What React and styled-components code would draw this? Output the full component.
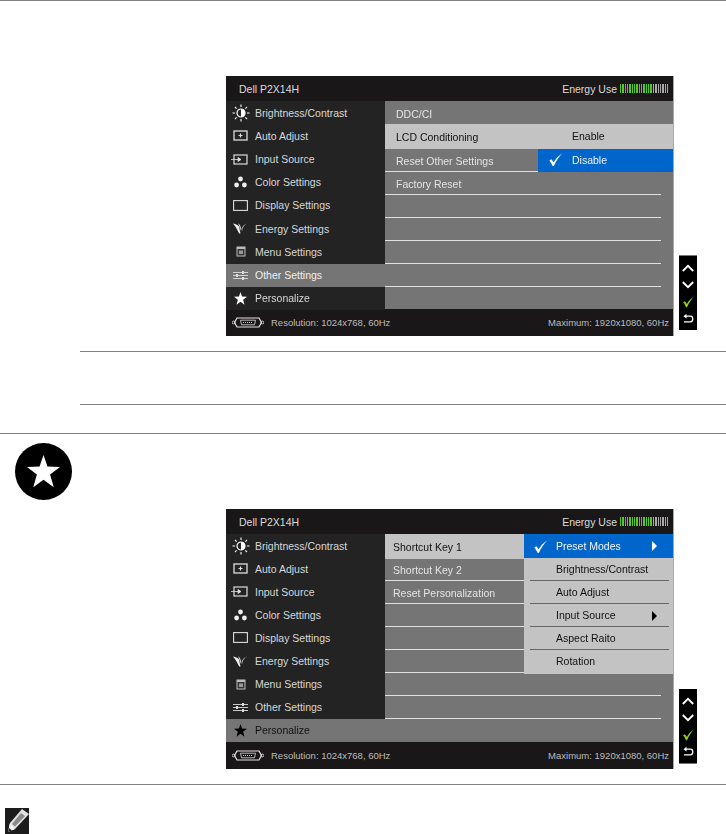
import React from "react";
import styled, { createGlobalStyle } from "styled-components";

const GlobalStyle = createGlobalStyle`
  html, body {
    margin: 0;
    height: 834px;
    overflow: hidden;
    background: #fff;
    font-family: "Liberation Sans", Arial, sans-serif;
  }
`;

const Page = styled.div`
  width: 726px;
  height: 834px;
  overflow: hidden;
`;

const Rule = styled.div`
  height: 1px;
  background: #7f7f7f;
  margin-left: ${(p) => p.$inset || 0}px;
  margin-top: ${(p) => p.$top || 0}px;
`;

const Shot = styled.section`
  display: flex;
  align-items: flex-end;
  padding-top: 75px;
`;

const Gutter = styled.div`
  width: 226px;
  height: 260px;
  margin-top: -75px;
  align-self: flex-start;
  flex-shrink: 0;
`;

const Badge = styled.div`
  width: 57px;
  height: 57px;
  margin: 9px 0 0 15px;
  border-radius: 50%;
  background: #000;
  display: flex;
  align-items: center;
  justify-content: center;
`;

const Osd = styled.div`
  position: relative;
  width: 447px;
  height: 260px;
  display: grid;
  grid-template-rows: 25px 208px 27px;
  background: #757575;
  box-shadow: 1px 0 0 #a8a8a8;
  filter: blur(0.4px);
  flex-shrink: 0;
`;

const Bar = styled.div`
  background: #1a1718;
  color: ${(p) => (p.$dim ? "#bdbdbd" : "#dcdcdc")};
  display: flex;
  align-items: center;
  justify-content: space-between;
  padding: 0 4px 0 ${(p) => p.$left || 13}px;
  font-size: ${(p) => (p.$dim ? 9.5 : 10.5)}px;
`;

const EnergyWrap = styled.div`
  display: flex;
  align-items: center;
  gap: ${(p) => p.$gap || 3}px;
`;

const Meter = styled.div`
  display: flex;
  gap: 1px;
  height: 9px;
  width: 49px;
  overflow: hidden;
`;

const Tick = styled.i`
  display: block;
  width: 1.35px;
  flex-shrink: 0;
  background: ${(p) => (p.$on ? "#58c52b" : "#a8a8a8")};
`;

const Body = styled.div`
  display: grid;
  grid-template-columns: 159px 1fr;
  position: relative;
  min-height: 0;
`;

const Side = styled.div`
  background: #232323;
  display: grid;
  grid-template-rows: repeat(9, 1fr);
`;

const SideRow = styled.div`
  display: flex;
  align-items: center;
  color: ${(p) => (p.$dark ? "#111" : p.$active ? "#f0f0f0" : "#d8d8d8")};
  background: ${(p) => (p.$active ? "#757575" : "transparent")};
  font-size: 10.5px;
`;

const IconBox = styled.span`
  width: 29px;
  display: flex;
  justify-content: center;
  align-items: center;
  flex-shrink: 0;
`;

const List = styled.div`
  display: flex;
  flex-direction: column;
  min-width: 0;
`;

const Item = styled.div`
  height: ${(p) => p.$h || 23}px;
  box-sizing: border-box;
  display: flex;
  align-items: center;
  padding-left: ${(p) => p.$pad || 11}px;
  padding-top: ${(p) => p.$shift || 0}px;
  font-size: 10.5px;
  color: ${(p) => (p.$selected ? "#111" : "#e4e4e4")};
  background: ${(p) => (p.$selected ? "#c3c3c3" : "transparent")};
  position: relative;
  white-space: nowrap;
  &::after {
    content: ${(p) => (p.$line ? '""' : "none")};
    position: absolute;
    left: 0;
    right: ${(p) => p.$lineEnd ?? 12}px;
    bottom: 0;
    height: 1.5px;
    background: #e0e0e0;
  }
`;

const Flyout = styled.div`
  position: absolute;
  top: ${(p) => p.$top}px;
  right: 0;
  width: ${(p) => p.$w}px;
  display: flex;
  flex-direction: column;
  background: ${(p) => p.$bg || "transparent"};
`;

const FlyItem = styled.div`
  height: ${(p) => p.$h || 23}px;
  box-sizing: border-box;
  display: flex;
  align-items: center;
  position: relative;
  padding-bottom: ${(p) => p.$lift ?? 2}px;
  font-size: 10.5px;
  color: ${(p) => (p.$on ? "#f2f2f2" : "#111")};
  background: ${(p) => (p.$on ? "#0066cc" : "transparent")};
  ${(p) => p.$rule && "&::after { content: ''; position: absolute; left: 6px; right: 4px; bottom: 0; height: 1.5px; background: #666; }"}
`;

const CheckBox = styled.span`
  width: ${(p) => p.$w}px;
  display: flex;
  justify-content: center;
  flex-shrink: 0;
`;

const Caret = styled.span`
  position: absolute;
  left: 128px;
  top: 50%;
  transform: translateY(-50%);
  width: 0;
  height: 0;
  border-left: 5px solid ${(p) => p.$color};
  border-top: 5.5px solid transparent;
  border-bottom: 5.5px solid transparent;
`;

const Strip = styled.div`
  width: 18px;
  height: 74px;
  margin-left: 6px;
  margin-bottom: 6px;
  background: #000;
  box-sizing: border-box;
  padding: 3px 0;
  box-shadow: ${(p) => (p.$shade === "top" ? "0 -1px 0 #777" : "0 1px 0 #777")};
  display: grid;
  grid-template-rows: repeat(4, 1fr);
  justify-items: center;
  align-items: center;
`;

const NoteIcon = styled.div`
  width: 24px;
  height: 26px;
  margin: 23px 0 0 5px;
  background: #1c1c1c;
  display: flex;
`;

const Tick2 = ({ size = 15, color = "#fff" }) => (
  <svg width={size} height={size} viewBox="0 0 16 16">
    <path d="M1.5 9 L3.6 7.7 L6 11 C8 7.5 11 4 15 1.5 C11.5 5 8.5 9.5 6.2 15 L5 15 C4 12.8 2.9 10.8 1.5 9 Z" fill={color} />
  </svg>
);

const Sun = () => (
  <svg width="18" height="18" viewBox="0 0 18 18">
    <circle cx="9" cy="9" r="4" fill="none" stroke="#fff" strokeWidth="1.2" />
    <path d="M9 5 A4 4 0 0 1 9 13 Z" fill="#fff" />
    <path d="M9 0.5V3M9 15V17.5M0.5 9H3M15 9H17.5M3 3L4.6 4.6M13.4 13.4L15 15M3 15L4.6 13.4M13.4 4.6L15 3" stroke="#fff" strokeWidth="1.1" />
  </svg>
);

const AutoAdjust = () => (
  <svg width="15" height="11" viewBox="0 0 15 11">
    <rect x="1" y="1" width="13" height="9" fill="none" stroke="#ddd" strokeWidth="1.3" />
    <path d="M7.5 3.5V7.5M5.5 5.5H9.5" stroke="#ddd" strokeWidth="1.2" />
  </svg>
);

const InputSource = () => (
  <svg width="19" height="11" viewBox="0 0 19 11">
    <rect x="3" y="1" width="13" height="9" fill="none" stroke="#ddd" strokeWidth="1.2" />
    <path d="M0 5.5H9M7 3.5L10 5.5L7 7.5Z" stroke="#ddd" fill="#ddd" strokeWidth="0.8" />
  </svg>
);

const ColorDots = () => (
  <svg width="13" height="12" viewBox="0 0 13 12">
    <circle cx="6.5" cy="3" r="2.4" fill="#eee" />
    <circle cx="2.6" cy="9" r="2.4" fill="#eee" />
    <circle cx="10.4" cy="9" r="2.4" fill="#eee" />
  </svg>
);

const DisplayIcon = () => (
  <svg width="15" height="11" viewBox="0 0 15 11">
    <rect x="0.6" y="0.6" width="13.8" height="9.8" fill="none" stroke="#ddd" strokeWidth="1.1" />
  </svg>
);

const EnergyIcon = () => (
  <svg width="15" height="11" viewBox="0 0 15 11">
    <path d="M0 0.5 C3 1 5 2 6 3.5 L7.5 10.5 L6.2 10.5 C4.5 7 2.5 3.5 0 0.5Z" fill="#eee" />
    <path d="M5 0.5 C6.5 1 7.5 2.5 8 5 L7.5 8 C7 5 6 2.5 5 0.5Z" fill="#ccc" />
    <path d="M14.5 0.5 C11.5 1.5 9.8 4 9 8.5 L8.4 6 C9.5 3 11.5 1 14.5 0.5Z" fill="#aaa" />
  </svg>
);

const MenuIcon = () => (
  <svg width="10" height="11" viewBox="0 0 10 11">
    <rect x="0.5" y="0.5" width="9" height="10" fill="#bbb" />
    <rect x="1.5" y="3" width="7" height="6.5" fill="#333" />
    <rect x="3" y="4.5" width="4" height="3.5" fill="#999" />
  </svg>
);

const Sliders = () => (
  <svg width="15" height="9" viewBox="0 0 15 9">
    <path d="M0 1.5H15M0 4.5H15M0 7.5H15" stroke="#ddd" strokeWidth="0.9" />
    <rect x="9" y="0" width="2" height="3" fill="#ddd" />
    <rect x="3" y="3" width="2" height="3" fill="#ddd" />
    <rect x="9" y="6" width="2" height="3" fill="#ddd" />
  </svg>
);

const Star = ({ size = 13, color = "#fff" }) => (
  <svg width={size} height={size} viewBox="0 0 20 20">
    <path d="M10 0 L12.4 7 L20 7.3 L14 11.8 L16.2 19.5 L10 15 L3.8 19.5 L6 11.8 L0 7.3 L7.6 7 Z" fill={color} />
  </svg>
);

const VgaPlug = () => (
  <svg width="32" height="11" viewBox="0 0 32 11">
    <path d="M5 1 H27 L29.5 5.5 L27 10 H5 L2.5 5.5 Z" fill="none" stroke="#e4e4e4" strokeWidth="1.2" />
    <path d="M8.5 3.2 H23.5 L22.5 7.8 H9.5 Z" fill="none" stroke="#ccc" strokeWidth="0.9" />
    <path d="M11 5.5H21" stroke="#ccc" strokeWidth="1.2" strokeDasharray="1 1" />
    <circle cx="1.6" cy="5.5" r="1.4" fill="none" stroke="#ddd" strokeWidth="0.9" />
    <circle cx="30.4" cy="5.5" r="1.4" fill="none" stroke="#ddd" strokeWidth="0.9" />
  </svg>
);

const ChevUp = () => (
  <svg width="12" height="8" viewBox="0 0 12 8">
    <path d="M0.8 7 L6 1.8 L11.2 7" fill="none" stroke="#fff" strokeWidth="1.8" />
  </svg>
);

const ChevDown = () => (
  <svg width="12" height="8" viewBox="0 0 12 8">
    <path d="M0.8 1 L6 6.2 L11.2 1" fill="none" stroke="#fff" strokeWidth="1.8" />
  </svg>
);

const BackArrow = () => (
  <svg width="11" height="11" viewBox="0 0 11 11">
    <path d="M2 3.2 H7.5 C10.5 3.2 10.5 8.8 7.5 8.8 H1" fill="none" stroke="#fff" strokeWidth="1.3" />
    <path d="M0.5 3.2 L3.5 0.8 V5.6 Z" fill="#fff" />
  </svg>
);

const Pencil = () => (
  <svg width="24" height="26" viewBox="0 0 24 26">
    <path d="M17 1 L24 6 L10 21 L3 24 L5 15 Z" fill="#e2e2e2" />
    <path d="M16 5 L20 8 L10 18.5 L7 16 Z" fill="#8a8a8a" />
    <path d="M5 15 L3 24 L10 21 L8 19 Z" fill="#f4f4f4" />
    <path d="M3 24 L4 20 L7 22.6 Z" fill="#1c1c1c" />
  </svg>
);

const menu = [
  ["Brightness/Contrast", <Sun />],
  ["Auto Adjust", <AutoAdjust />],
  ["Input Source", <InputSource />],
  ["Color Settings", <ColorDots />],
  ["Display Settings", <DisplayIcon />],
  ["Energy Settings", <EnergyIcon />],
  ["Menu Settings", <MenuIcon />],
  ["Other Settings", <Sliders />],
  ["Personalize", <Star />],
];

const ticks = Array.from({ length: 21 }, (_, i) => i < 14);

const SideMenu = ({ active }) => (
  <Side>
    {menu.map(([label, icon]) => (
      <SideRow key={label} $active={label === active} $dark={label === active && label === "Personalize"}>
        <IconBox>
          {label === "Personalize" && label === active ? <Star color="#000" /> : icon}
        </IconBox>
        {label}
      </SideRow>
    ))}
  </Side>
);

const Monitor = ({ active, children }) => (
  <Osd>
    <Bar>
      <span>Dell P2X14H</span>
      <EnergyWrap>
        <span>Energy Use</span>
        <Meter>
          {ticks.map((on, i) => (
            <Tick key={i} $on={on} />
          ))}
        </Meter>
      </EnergyWrap>
    </Bar>
    <Body>
      <SideMenu active={active} />
      {children}
    </Body>
    <Bar $dim $left={6}>
      <EnergyWrap $gap={7}>
        <VgaPlug />
        <span>Resolution: 1024x768, 60Hz</span>
      </EnergyWrap>
      <span>Maximum: 1920x1080, 60Hz</span>
    </Bar>
  </Osd>
);

const Buttons = ({ shade }) => (
  <Strip $shade={shade}>
    <ChevUp />
    <ChevDown />
    <Tick2 size={13} color="#8ed414" />
    <BackArrow />
  </Strip>
);

export default function App() {
  return (
    <Page>
      <GlobalStyle />
      <Rule />
      <Shot>
        <Gutter />
        <Monitor active="Other Settings">
          <List>
            <Item $shift={2}>DDC/CI</Item>
            <Item $h={25} $selected>LCD Conditioning</Item>
            <Item $line>Reset Other Settings</Item>
            <Item $line>Factory Reset</Item>
            <Item $line />
            <Item $line />
            <Item $line />
            <Item $line />
            <Item />
          </List>
          <Flyout $top={23} $w={135}>
            <FlyItem $h={25} $lift={1}>
              <CheckBox $w={34} />
              Enable
            </FlyItem>
            <FlyItem $on>
              <CheckBox $w={34}><Tick2 /></CheckBox>
              Disable
            </FlyItem>
          </Flyout>
        </Monitor>
        <Buttons shade="top" />
      </Shot>
      <Rule $inset={80} $top={15} />
      <Rule $inset={80} $top={52} />
      <Rule $top={28} />
      <Shot>
        <Gutter>
          <Badge>
            <Star size={33} />
          </Badge>
        </Gutter>
        <Monitor active="Personalize">
          <List>
            <Item $h={25} $pad={8} $selected>Shortcut Key 1</Item>
            <Item $h={22} $pad={8} $line $lineEnd={0}>Shortcut Key 2</Item>
            <Item $pad={8} $line $lineEnd={0}>Reset Personalization</Item>
            <Item $line $lineEnd={0} />
            <Item $line $lineEnd={0} />
            <Item $line $lineEnd={0} />
            <Item $line />
            <Item $line />
          </List>
          <Flyout $top={0} $w={149} $bg="#c3c3c3">
            <FlyItem $h={24} $on $lift={0}>
              <CheckBox $w={32}><Tick2 /></CheckBox>
              Preset Modes
              <Caret $color="#fff" />
            </FlyItem>
            <FlyItem $rule>
              <CheckBox $w={32} />
              Brightness/Contrast
            </FlyItem>
            <FlyItem $rule>
              <CheckBox $w={32} />
              Auto Adjust
            </FlyItem>
            <FlyItem $rule>
              <CheckBox $w={32} />
              Input Source
              <Caret $color="#000" />
            </FlyItem>
            <FlyItem $rule>
              <CheckBox $w={32} />
              Aspect Raito
            </FlyItem>
            <FlyItem $h={24}>
              <CheckBox $w={32} />
              Rotation
            </FlyItem>
          </Flyout>
        </Monitor>
        <Buttons shade="bottom" />
      </Shot>
      <Rule $top={15} />
      <NoteIcon>
        <Pencil />
      </NoteIcon>
    </Page>
  );
}
